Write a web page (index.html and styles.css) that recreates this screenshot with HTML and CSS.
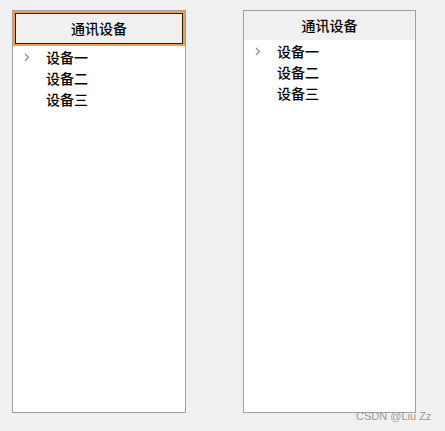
FILE: index.html
```html
<!DOCTYPE html>
<html lang="zh-CN">
<head>
  <meta charset="UTF-8" />
  <meta name="viewport" content="width=device-width, initial-scale=1.0"/>
  <title>通讯设备</title>
  <link rel="stylesheet" href="styles.css">
</head>
<body>
  <div class="panels">
    <div class="tree-panel">
      <div class="tree-header focused">通讯设备</div>
      <ul class="tree-list">
        <li class="tree-item">
          <svg class="arrow" width="6" height="9" viewBox="0 0 6 9"><polyline points="1,1 4.5,4.5 1,8" fill="none" stroke="#8a8a8a" stroke-width="1.2"/></svg>
          <span>设备一</span>
        </li>
        <li class="tree-item"><span>设备二</span></li>
        <li class="tree-item"><span>设备三</span></li>
      </ul>
    </div>

    <div class="tree-panel narrow">
      <div class="tree-header">通讯设备</div>
      <ul class="tree-list">
        <li class="tree-item">
          <svg class="arrow" width="6" height="9" viewBox="0 0 6 9"><polyline points="1,1 4.5,4.5 1,8" fill="none" stroke="#8a8a8a" stroke-width="1.2"/></svg>
          <span>设备一</span>
        </li>
        <li class="tree-item"><span>设备二</span></li>
        <li class="tree-item"><span>设备三</span></li>
      </ul>
    </div>
  </div>

  <div class="watermark">CSDN @Liu Zz</div>
</body>
</html>
```

FILE: styles.css
```css
body { margin: 0; background: #f0f0f0; font-family: "Noto Sans CJK SC", "Liberation Sans", sans-serif; color: #000; }
.panels { display: flex; gap: 57px; padding: 10px 0 0 12px; }
.tree-panel { width: 172px; height: 401px; border: 1px solid #a0a0a0; background: #fff; }
.tree-panel.narrow { width: 171px; }
.tree-header { height: 29px; background: #f0f0f0; font-size: 14px; font-weight: 500; line-height: 29px; text-align: center; }
.tree-header.focused { height: 31px; line-height: 31px; border: 2px solid #f0a048; box-shadow: inset 0 0 0 1px #1a1a1a; background: #f0f0f0; }
.tree-list { list-style: none; margin: 0; padding: 1px 0 0 0; }
.tree-item { position: relative; height: 21px; line-height: 21px; font-size: 14px; font-weight: 500; padding-left: 33px; }
.arrow { position: absolute; left: 11px; top: 6px; }
.watermark { position: absolute; left: 356px; top: 410px; font-family: "Liberation Sans", sans-serif; font-size: 11px; color: #9a9a9a; }
```
